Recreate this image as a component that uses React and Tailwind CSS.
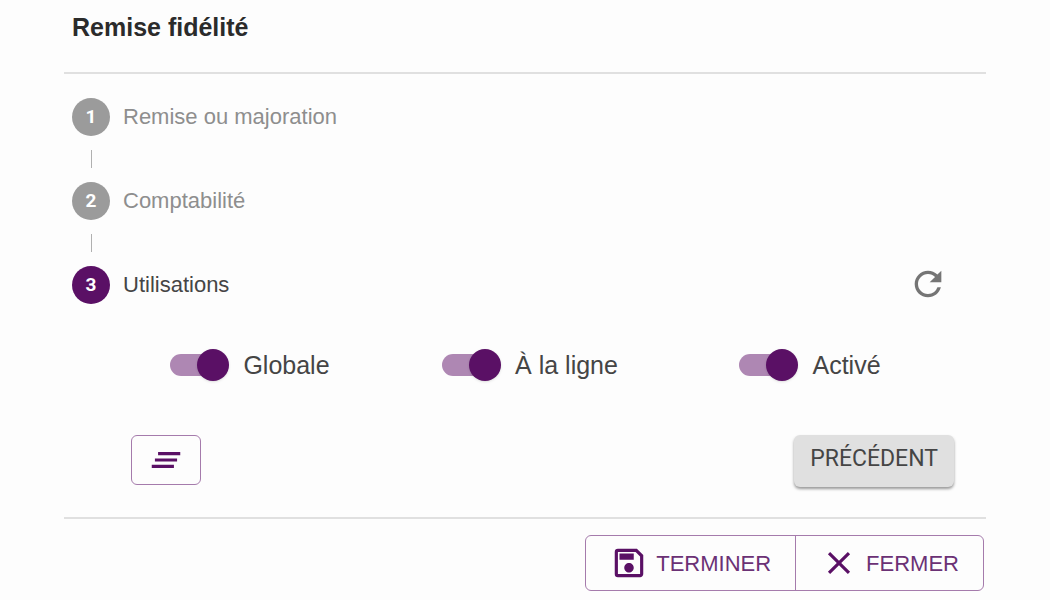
import { MdClearAll, MdClose, MdOutlineSave, MdRefresh } from "react-icons/md";

const steps = ["Remise ou majoration", "Comptabilité", "Utilisations"];
const current = 2;

function Step({ number, label, active }) {
  return (
    <div className="flex items-center gap-[13px] text-[22px] leading-7">
      <span className={`flex size-[38px] items-center justify-center rounded-full font-[Roboto,sans-serif] text-[19px] font-bold text-white ${active ? "bg-[#5a1065]" : "bg-[#9b9b9b]"}`}>
        {number}
      </span>
      <span className={active ? "text-[#454545]" : "text-[#8e8e8e]"}>{label}</span>
    </div>
  );
}

function Switch({ id, label }) {
  return (
    <div className="flex items-center justify-center gap-[14px]">
      <input
        id={id}
        type="checkbox"
        defaultChecked
        className="flex h-8 shrink-0 cursor-pointer appearance-none items-center before:h-[22px] before:w-[52px] before:rounded-full before:bg-[#b9b9b9] after:-ml-[52px] after:mr-5 after:size-8 after:rounded-full after:bg-white after:shadow checked:before:bg-[#ae87b3] checked:after:-ml-[25px] checked:after:mr-0 checked:after:bg-[#5a1065]"
      />
      <label htmlFor={id} className="text-[25px] leading-[30px] text-[#454545]">{label}</label>
    </div>
  );
}

export default function App() {
  return (
    <main className="min-h-screen bg-[#fdfdfd] px-16 font-['Liberation_Sans',Arial,sans-serif]">
      <header className="border-b-2 border-[#e0e0e0] px-2 pt-[11px] pb-[29px]">
        <h1 className="text-[25px] leading-8 font-bold text-[#2b2b2b]">Remise fidélité</h1>
      </header>

      <section className="border-b-2 border-[#e0e0e0] px-2 pt-6 pb-[30px]">
        <div className="flex items-end justify-between">
          <ol>
            {steps.map((label, i) => (
              <li key={label}>
                {i > 0 && <div className="my-[14px] ml-[19px] h-[18px] w-px bg-[#b0b0b0]" />}
                <Step number={i + 1} label={label} active={i === current} />
              </li>
            ))}
          </ol>
          <button aria-label="Réinitialiser" className="mr-[30px] text-[#757575]">
            <MdRefresh size={40} />
          </button>
        </div>

        <div className="mt-[45px] mr-7 ml-[38px] grid grid-cols-3">
          <Switch id="globale" label="Globale" />
          <Switch id="ligne" label="À la ligne" />
          <Switch id="active" label="Activé" />
        </div>

        <div className="mt-[54px] mr-6 ml-[59px] flex items-start justify-between">
          <button aria-label="Tout effacer" className="flex h-[50px] items-center rounded-md border border-[#a57bac] px-[15px] text-[#5a1065]">
            <MdClearAll size={38} />
          </button>
          <button className="rounded-md bg-[#e0e0e0] px-4 pt-[10px] pb-[14px] font-[Roboto,sans-serif] text-[23px] leading-7 text-[#454545] shadow-[0_2px_3px_rgba(0,0,0,0.4)]">
            PRÉCÉDENT
          </button>
        </div>
      </section>

      <footer className="flex justify-end pt-4 pr-[2px]">
        <div className="flex h-14 divide-x divide-[#a57bac] rounded-md border border-[#a57bac] text-[22px] text-[#6b3175]">
          <button className="flex items-center gap-2 px-6">
            <MdOutlineSave size={38} className="text-[#5a1065]" />
            TERMINER
          </button>
          <button className="flex items-center gap-2 px-6">
            <MdClose size={38} className="text-[#5a1065]" />
            FERMER
          </button>
        </div>
      </footer>
    </main>
  );
}
